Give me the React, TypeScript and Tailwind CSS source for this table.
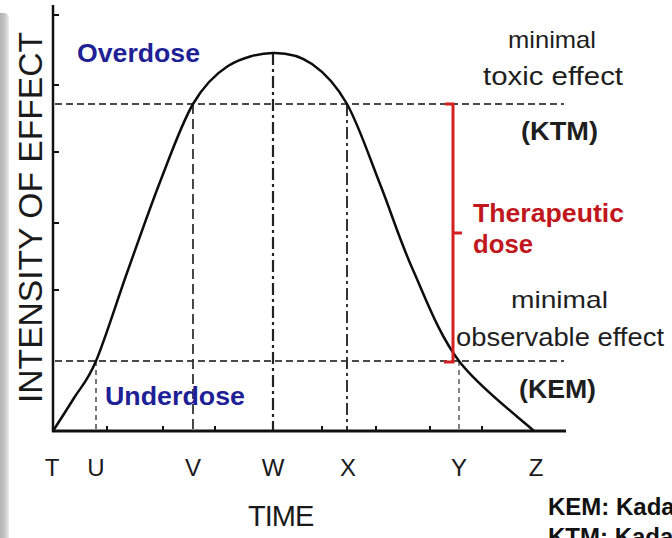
const FONT = "'Liberation Sans', Arial, sans-serif";

// points picked along the bell curve (page coordinates)
const curve: [number, number][] = [
  [53, 431],
  [74, 398],
  [96, 361],
  [128, 270],
  [160, 182],
  [193, 104],
  [228, 66],
  [273, 53],
  [312, 64],
  [347, 104],
  [380, 184],
  [413, 270],
  [459, 361],
  [534, 431],
];

function smoothPath(pts: [number, number][]) {
  let d = `M${pts[0][0]},${pts[0][1]}`;
  for (let i = 0; i < pts.length - 1; i++) {
    const p0 = pts[i - 1] ?? pts[i];
    const p1 = pts[i];
    const p2 = pts[i + 1];
    const p3 = pts[i + 2] ?? p2;
    const c1x = p1[0] + (p2[0] - p0[0]) / 6;
    const c1y = p1[1] + (p2[1] - p0[1]) / 6;
    const c2x = p2[0] - (p3[0] - p1[0]) / 6;
    const c2y = p2[1] - (p3[1] - p1[1]) / 6;
    d += ` C${c1x.toFixed(1)},${c1y.toFixed(1)} ${c2x.toFixed(1)},${c2y.toFixed(1)} ${p2[0]},${p2[1]}`;
  }
  return d;
}

const axisLetters = [
  { label: "T", x: 52 },
  { label: "U", x: 96 },
  { label: "V", x: 193 },
  { label: "W", x: 273 },
  { label: "X", x: 348 },
  { label: "Y", x: 459 },
  { label: "Z", x: 536 },
];

const yTicks = [15, 85, 152, 223, 290];
const xTicks = [107, 163, 215, 322, 376, 430, 482];

export default function App() {
  return (
    <div className="flex h-[538px] w-[672px] overflow-hidden bg-white" style={{ fontFamily: FONT }}>
      <div className="mt-[13px] w-[9px] shrink-0 rounded-tr-[5px] bg-gradient-to-r from-[#b4b4b4] via-[#c4c4c4] to-[#ececec]" />
      <div className="flex min-w-0 flex-1 flex-col">
        <EffectChart />
        <div className="flex">
          <div className="w-[539px] shrink-0 pl-[239px] pt-[12px]">
            <span className="text-[29px] leading-none tracking-[-1px] text-[#1a1a1a]">TIME</span>
          </div>
          <div className="whitespace-nowrap pt-[2px] text-[24px] font-bold leading-[30px] text-[#111]">
            <p>KEM: Kadar Efektif Minimal</p>
            <p>KTM: Kadar Toksik Minimal</p>
          </div>
        </div>
      </div>
    </div>
  );
}

function EffectChart() {
  return (
    <svg className="block shrink-0" width={663} height={490} viewBox="9 0 663 490" fontFamily={FONT}>
      {/* threshold lines */}
      <line x1={55} y1={104} x2={564} y2={104} stroke="#4a4a4a" strokeWidth={2} strokeDasharray="7 4" />
      <line x1={55} y1={361} x2={564} y2={361} stroke="#4a4a4a" strokeWidth={2} strokeDasharray="7 4" />

      {/* time markers */}
      <line x1={96} y1={361} x2={96} y2={430} stroke="#555" strokeWidth={1.6} strokeDasharray="5 4" />
      <line x1={193} y1={104} x2={193} y2={430} stroke="#333" strokeWidth={1.8} strokeDasharray="10 5" />
      <line x1={273} y1={53} x2={273} y2={430} stroke="#222" strokeWidth={2.2} strokeDasharray="12 4 3 4" />
      <line x1={347} y1={104} x2={347} y2={430} stroke="#333" strokeWidth={2} strokeDasharray="12 4 3 4" />
      <line x1={459} y1={361} x2={459} y2={430} stroke="#666" strokeWidth={1.6} strokeDasharray="5 4" />

      {/* axes */}
      <line x1={53} y1={5} x2={53} y2={432} stroke="#111" strokeWidth={2.5} />
      <line x1={52} y1={431} x2={566} y2={431} stroke="#111" strokeWidth={3} />
      {yTicks.map((y) => (
        <line key={y} x1={53} y1={y} x2={59} y2={y} stroke="#111" strokeWidth={2} />
      ))}
      {xTicks.map((x) => (
        <line key={x} x1={x} y1={426} x2={x} y2={431} stroke="#111" strokeWidth={2} />
      ))}

      {/* response curve */}
      <path d={smoothPath(curve)} fill="none" stroke="#0d0d0d" strokeWidth={2.5} />

      {/* therapeutic bracket */}
      <path d="M445,104 H453 V362 H444" fill="none" stroke="#d42020" strokeWidth={3} />
      <line x1={453} y1={233} x2={462} y2={233} stroke="#d42020" strokeWidth={3} />

      {/* labels */}
      <text x={77} y={62} fontSize={26} fontWeight={700} fill="#1f1f96" textLength={123} lengthAdjust="spacingAndGlyphs">Overdose</text>
      <text x={105} y={405} fontSize={26} fontWeight={700} fill="#1f1f96" textLength={140} lengthAdjust="spacingAndGlyphs">Underdose</text>

      <text x={508} y={48} fontSize={24} fill="#1e1e1e" textLength={88} lengthAdjust="spacingAndGlyphs">minimal</text>
      <text x={483} y={85} fontSize={25} fill="#1e1e1e" textLength={140} lengthAdjust="spacingAndGlyphs">toxic effect</text>
      <text x={521} y={140} fontSize={25} fontWeight={700} fill="#1e1e1e" textLength={77} lengthAdjust="spacingAndGlyphs">(KTM)</text>

      <text x={473} y={222} fontSize={26} fontWeight={700} fill="#c0161c" textLength={151} lengthAdjust="spacingAndGlyphs">Therapeutic</text>
      <text x={473} y={253} fontSize={26} fontWeight={700} fill="#c0161c" textLength={60} lengthAdjust="spacingAndGlyphs">dose</text>

      <text x={511} y={308} fontSize={24} fill="#1e1e1e" textLength={97} lengthAdjust="spacingAndGlyphs">minimal</text>
      <text x={456} y={346} fontSize={25} fill="#1e1e1e" textLength={208} lengthAdjust="spacingAndGlyphs">observable effect</text>
      <text x={519} y={398} fontSize={25} fontWeight={700} fill="#1e1e1e" textLength={77} lengthAdjust="spacingAndGlyphs">(KEM)</text>

      {axisLetters.map((l) => (
        <text key={l.label} x={l.x} y={476} fontSize={24} fill="#1a1a1a" textAnchor="middle">
          {l.label}
        </text>
      ))}

      <text
        transform="translate(42,403) rotate(-90)"
        fontSize={33}
        fill="#1a1a1a"
        textLength={371}
        lengthAdjust="spacingAndGlyphs"
      >
        INTENSITY OF EFFECT
      </text>
    </svg>
  );
}
